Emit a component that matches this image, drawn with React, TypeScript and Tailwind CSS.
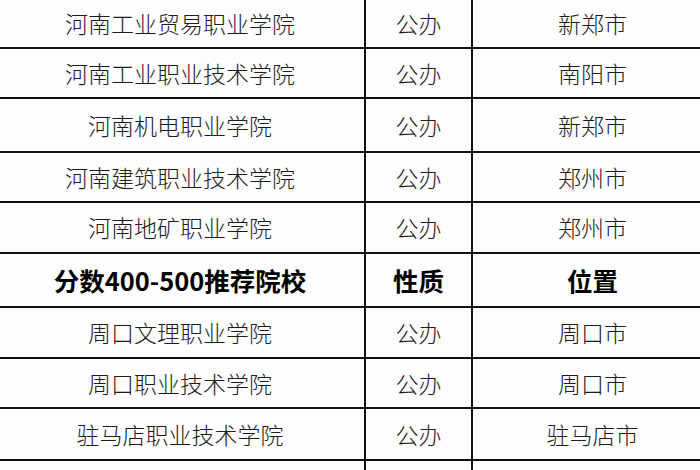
import React from "react";

type Row = { name: string; kind: string; city: string; h: string; head?: boolean };

const rows: Row[] = [
    { name: "河南工业贸易职业学院", kind: "公办", city: "新郑市", h: "h-[49px]" },
    { name: "河南工业职业技术学院", kind: "公办", city: "南阳市", h: "h-[50px]" },
    { name: "河南机电职业学院", kind: "公办", city: "新郑市", h: "h-[54px]" },
    { name: "河南建筑职业技术学院", kind: "公办", city: "郑州市", h: "h-[50px]" },
    { name: "河南地矿职业学院", kind: "公办", city: "郑州市", h: "h-[51px]" },
    { name: "分数400-500推荐院校", kind: "性质", city: "位置", h: "h-[54px]", head: true },
    { name: "周口文理职业学院", kind: "公办", city: "周口市", h: "h-[51px]" },
    { name: "周口职业技术学院", kind: "公办", city: "周口市", h: "h-[50px]" },
    { name: "驻马店职业技术学院", kind: "公办", city: "驻马店市", h: "h-[52px]" },
    { name: "", kind: "", city: "", h: "h-[40px]" },
];

export default function App() {
    return (
        <div
            className="w-[700px] h-[470px] overflow-hidden bg-[#fdfdfd]"
            style={{ fontFamily: '"Noto Sans CJK SC", "Noto Sans", sans-serif' }}
        >
            <div className="flex flex-col">
                {rows.map((row, i) => (
                    <div
                        key={i}
                        className={`grid grid-cols-[366px_107px_1fr] border-b-2 border-[#111] ${row.h} ${
                            row.head ? "text-[25.5px] font-bold text-black" : "text-[23px] font-light text-[#1c1c1c]"
                        }`}
                    >
                        <div className="flex items-center justify-center border-r-2 border-[#111] pr-1">
                            {row.name}
                        </div>
                        <div className="flex items-center justify-center border-r-2 border-[#111]">
                            {row.kind}
                        </div>
                        <div className="flex items-center justify-center pl-3">{row.city}</div>
                    </div>
                ))}
            </div>
        </div>
    );
}
